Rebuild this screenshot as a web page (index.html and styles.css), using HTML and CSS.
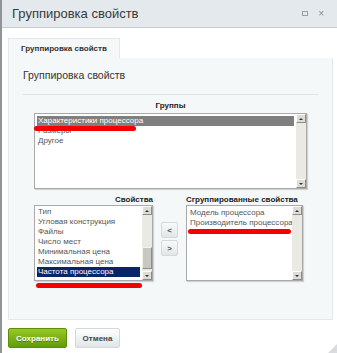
FILE: index.html
```html
<!DOCTYPE html>
<html lang="ru">
<head>
    <meta charset="UTF-8">
    <title>Группировка свойств</title>
    <link rel="stylesheet" href="styles.css">
</head>
<body>
    <div class="dialog">
        <div class="dialog-head">
            <span class="dialog-title">Группировка свойств</span>
            <span class="head-icons">
                <span class="icon-max"></span>
                <span class="icon-close">×</span>
            </span>
        </div>

        <div class="dialog-body">
            <div class="tabs">
                <div class="tab">Группировка свойств</div>
            </div>
            <div class="panel">
                <div class="panel-title">Группировка свойств</div>

                <div class="groups">
                    <div class="field-label center">Группы</div>
                    <div class="listbox groups-list">
                        <div class="items">
                            <div class="item sel-grey">Характеристики процессора</div>
                            <div class="item">Размеры</div>
                            <div class="item">Другое</div>
                        </div>
                        <div class="scrollbar">
                            <div class="arrow up"></div>
                            <div class="track"></div>
                            <div class="arrow down"></div>
                        </div>
                        <div class="mark mark-groups"></div>
                    </div>
                </div>

                <div class="props">
                    <div class="field-label right">Свойства</div>
                    <div></div>
                    <div class="field-label">Сгруппированные свойства</div>

                    <div class="listbox props-list">
                        <div class="items">
                            <div class="item">Тип</div>
                            <div class="item">Угловая конструкция</div>
                            <div class="item">Файлы</div>
                            <div class="item">Число мест</div>
                            <div class="item">Минимальная цена</div>
                            <div class="item">Максимальная цена</div>
                            <div class="item sel-blue">Частота процессора</div>
                        </div>
                        <div class="scrollbar">
                            <div class="arrow up"></div>
                            <div class="track"><div class="thumb"></div></div>
                            <div class="arrow down"></div>
                        </div>
                        <div class="mark mark-props"></div>
                    </div>

                    <div class="move-btns">
                        <button class="move">&lt;</button>
                        <button class="move">&gt;</button>
                    </div>

                    <div class="listbox grouped-list">
                        <div class="items">
                            <div class="item">Модель процессора</div>
                            <div class="item">Производитель процессора</div>
                        </div>
                        <div class="scrollbar">
                            <div class="arrow up"></div>
                            <div class="track"></div>
                            <div class="arrow down"></div>
                        </div>
                        <div class="mark mark-grouped"></div>
                    </div>
                </div>
            </div>

            <div class="footer">
                <button class="btn btn-save">Сохранить</button>
                <button class="btn btn-cancel">Отмена</button>
            </div>
        </div>
        <div class="grip"></div>
    </div>
</body>
</html>
```

FILE: styles.css
```css
* { margin: 0; padding: 0; box-sizing: border-box; }
html, body { width: 337px; height: 353px; overflow: hidden; }
body {
    font-family: 'Liberation Sans', Arial, sans-serif;
    background: #fff;
    color: #333;
}
.dialog {
    position: relative;
    height: 353px;
    border-left: 2px solid #8e9497;
}
.dialog-head {
    height: 28px;
    background: #e3e9ec;
    border-bottom: 1px solid #c6cdd1;
    display: flex;
    align-items: center;
    justify-content: space-between;
    padding: 0 13px 0 10px;
}
.dialog-title {
    font-size: 13px;
    color: #3a3a3a;
}
.head-icons {
    display: flex;
    align-items: center;
    gap: 10px;
    color: #8d9396;
}
.icon-max {
    width: 6px;
    height: 5px;
    border: 1px solid #9aa0a3;
}
.icon-close {
    font-size: 10px;
    line-height: 10px;
}

.dialog-body {
    padding: 10px 4px 0 6px;
}
.tabs { display: flex; }
.tab {
    width: 112px;
    height: 20px;
    line-height: 20px;
    text-align: center;
    font-size: 8px;
    font-weight: bold;
    color: #333;
    background: #f5f8f9;
    border: 1px solid #e3e9eb;
    border-bottom: none;
}
.panel {
    height: 262px;
    background: #f5f8f9;
    border: 1px solid #e3e9eb;
    border-top: none;
    padding: 0 14px;
}
.panel-title {
    padding-top: 11px;
    font-size: 10.5px;
    line-height: 13px;
    color: #333;
    padding-bottom: 12px;
    border-bottom: 1px solid #dfe5e7;
}

.field-label {
    font-size: 8px;
    line-height: 10px;
    font-weight: bold;
    color: #222;
}
.field-label.center { text-align: center; }
.field-label.right { text-align: right; }

.groups {
    margin: 6px 11px 0;
}
.groups .field-label { margin-bottom: 2px; }

.listbox {
    position: relative;
    display: flex;
    background: #fff;
    border: 1px solid #a9a9a9;
    box-shadow: 1px 1px 1px rgba(0, 0, 0, 0.15);
}
.groups-list { height: 76px; }
.items {
    flex: 1;
    padding: 2px 2px 0;
    overflow: hidden;
}
.item {
    font-size: 8px;
    line-height: 10px;
    height: 10px;
    color: #555;
    padding-left: 1px;
    white-space: nowrap;
}
.sel-grey { background: #7f7f7f; color: #fff; }
.sel-blue { background: #0a246a; color: #fff; }

.scrollbar {
    width: 10px;
    display: flex;
    flex-direction: column;
    background: #ebe9e4;
}
.arrow {
    height: 9px;
    background: #dedcd6;
    border: 1px solid;
    border-color: #fff #8e8c86 #8e8c86 #fff;
    position: relative;
}
.arrow::after {
    content: '';
    position: absolute;
    left: 2px;
    top: 2px;
    border: 2px solid transparent;
}
.arrow.up::after { border-bottom-color: #333; top: 1px; }
.arrow.down::after { border-top-color: #333; top: 3px; }
.track {
    flex: 1;
    display: flex;
    flex-direction: column;
    justify-content: flex-end;
}
.thumb {
    height: 22px;
    margin-bottom: 2px;
    background: #c9c7c1;
    border: 1px solid;
    border-color: #f3f2ef #8e8c86 #8e8c86 #f3f2ef;
}

.props {
    display: grid;
    grid-template-columns: 119px 17px 117px;
    column-gap: 8px;
    margin: 6px 11px 0;
    width: 269px;
}
.props .field-label { margin-bottom: 0; white-space: nowrap; }
.props-list, .grouped-list { height: 76px; }
.props-list .items { padding-top: 1px; }
.props-list .item { height: 10px; }

.move-btns {
    display: flex;
    flex-direction: column;
    gap: 2px;
    padding-top: 17px;
}
.move {
    width: 17px;
    height: 16px;
    font-family: 'Liberation Sans', Arial, sans-serif;
    font-size: 8px;
    font-weight: bold;
    color: #555;
    background: linear-gradient(to bottom, #f9fafa, #e1e6e8);
    border: 1px solid #d3d9dc;
    border-radius: 2px;
}

.mark {
    position: absolute;
    height: 5px;
    background: #f40000;
    border-radius: 3px;
}
.mark-groups { left: -1px; top: 12px; width: 102px; }
.mark-props { left: 1px; top: 77px; width: 106px; }
.mark-grouped { left: 1px; top: 23px; width: 103px; }

.footer {
    display: flex;
    gap: 8px;
    padding-top: 8px;
}
.btn {
    height: 20px;
    font-family: 'Liberation Sans', Arial, sans-serif;
    font-size: 8px;
    font-weight: bold;
    border-radius: 2px;
}
.btn-save {
    width: 59px;
    color: #fff;
    text-shadow: 0 1px 0 rgba(0, 0, 0, 0.3);
    background: linear-gradient(to bottom, #98c823, #609c0b);
    border: 1px solid #5b8f0b;
}
.btn-cancel {
    width: 45px;
    color: #444;
    background: linear-gradient(to bottom, #ffffff, #dfe6e9);
    border: 1px solid #d2d9dc;
}

.grip {
    position: absolute;
    right: 0;
    bottom: 0;
    width: 0;
    height: 0;
    border-left: 9px solid transparent;
    border-bottom: 9px solid #d8dcde;
}
```
